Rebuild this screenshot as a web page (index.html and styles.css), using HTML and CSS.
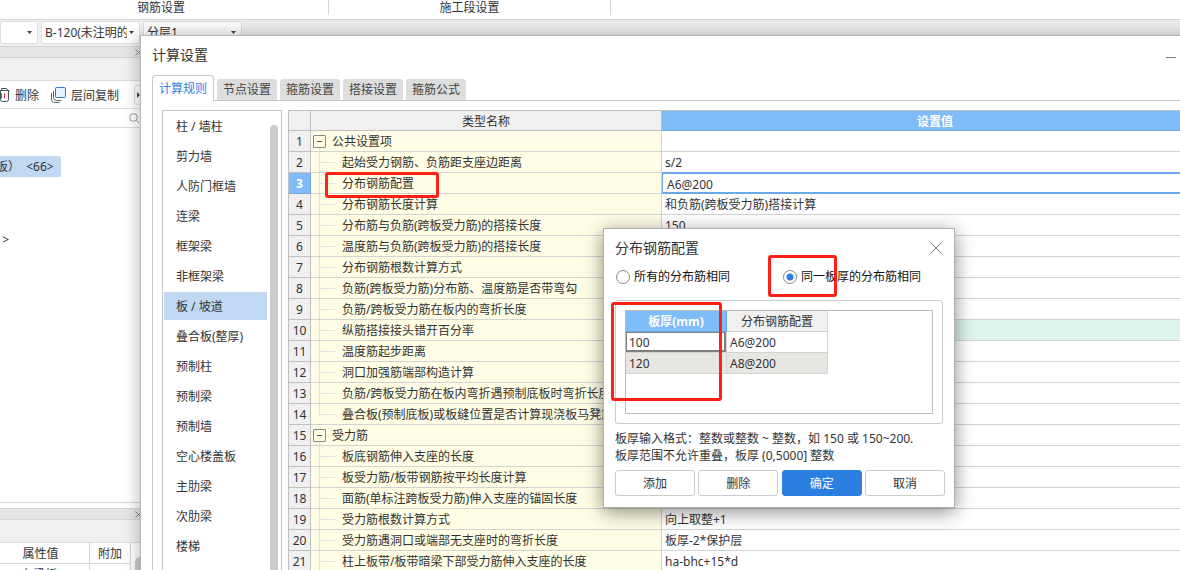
FILE: index.html
```
<!DOCTYPE html>
<html lang="zh-CN">
<head>
  <meta charset="UTF-8">
  <meta name="viewport" content="width=device-width, initial-scale=1.0">
  <title>计算设置</title>
  <link rel="stylesheet" href="styles.css">
</head>
<body>

  <!-- Main application window -->
  <div class="app">
    <div class="ribbon">
      <div class="ribbon-group first">钢筋设置</div>
      <div class="ribbon-group second">施工段设置</div>
    </div>

    <div class="selectors">
      <select class="combo short" aria-label="类别"><option></option></select>
      <select class="combo" aria-label="构件"><option>B-120(未注明的板)</option></select>
      <select class="combo" aria-label="分层"><option>分层1</option></select>
    </div>

    <div class="side">
      <div class="side-strip"><button class="strip-close" aria-label="关闭"><svg width="7" height="7" viewBox="0 0 7 7"><path d="M0.5 0.5l6 6M6.5 0.5l-6 6"/></svg></button></div>
      <div class="side-head"></div>
      <div class="side-tools">
        <button class="tool">
          <svg width="11" height="16" viewBox="0 0 11 16">
            <path d="M0 3.5h9.500M0.500 3.500v9q0 2 2 2h4q2 0 2-2v-9M1.500 3V1.500h5l1 1.500" stroke="#4a5056" fill="none"/>
            <path d="M1.500 6.500v5M4.500 6.500v5" stroke="#e0303a" fill="none"/>
          </svg>
          <span>删除</span>
        </button>
        <button class="tool">
          <svg width="16" height="16" viewBox="0 0 16 16">
            <path d="M0.500 6v6.500q0 3 3 3h5M2.500 4v6.500q0 3 3 3h5" stroke="#59636c" fill="none"/>
            <rect x="4.500" y="0.500" width="10" height="10" rx="1" fill="#e3f0ff" stroke="#2f78d8"/>
          </svg>
          <span>层间复制</span>
        </button>
        <button class="tool-more" aria-label="更多"><svg width="3" height="6" viewBox="0 0 3 6"><path d="M0 0l3 3l-3 3z"/></svg></button>
      </div>
      <div class="search">
        <input type="text" aria-label="搜索">
        <svg width="11" height="11" viewBox="0 0 11 11"><circle cx="4.500" cy="4.500" r="3.800"/><path d="M7.500 7.500L10 10"/></svg>
      </div>
      <div class="tree">
        <a class="tree-item selected" href="#">板）&nbsp; &lt;66&gt;</a>
        <a class="tree-item" href="#">&nbsp;&nbsp;&gt;</a>
      </div>
      <div class="side-strip lower"><button class="strip-close" aria-label="关闭"><svg width="7" height="7" viewBox="0 0 7 7"><path d="M0.5 0.5l6 6M6.5 0.5l-6 6"/></svg></button></div>
      <div class="side-head"></div>
      <div class="props-wrap">
        <table class="props">
          <tr><th>属性值</th><th class="extra">附加</th></tr>
          <tr><td>有梁板-1</td><td></td></tr>
        </table>
        <div class="props-scroll"></div>
      </div>
    </div>
  </div>

  <!-- Settings window -->
  <div class="window">
    <div class="window-title">
      <h1>计算设置</h1>
      <button class="minimize" aria-label="最小化"></button>
    </div>

    <div class="tabs">
      <button class="tab active">计算规则</button>
      <button class="tab">节点设置</button>
      <button class="tab">箍筋设置</button>
      <button class="tab">搭接设置</button>
      <button class="tab">箍筋公式</button>
    </div>

    <div class="panel">
      <div class="category">
        <nav class="category-list">
          <a href="#">柱 / 墙柱</a>
          <a href="#">剪力墙</a>
          <a href="#">人防门框墙</a>
          <a href="#">连梁</a>
          <a href="#">框架梁</a>
          <a href="#">非框架梁</a>
          <a href="#" class="current">板 / 坡道</a>
          <a href="#">叠合板(整厚)</a>
          <a href="#">预制柱</a>
          <a href="#">预制梁</a>
          <a href="#">预制墙</a>
          <a href="#">空心楼盖板</a>
          <a href="#">主肋梁</a>
          <a href="#">次肋梁</a>
          <a href="#">楼梯</a>
        </nav>
        <div class="category-scroll"></div>
      </div>

      <table class="rules">
        <colgroup><col class="col-no"><col class="col-name"><col></colgroup>
        <tr><th></th><th>类型名称</th><th class="picked">设置值</th></tr>
        <tr class="group"><td>1</td><td><button class="toggle" aria-label="折叠"></button>公共设置项</td><td></td></tr>
        <tr><td>2</td><td>起始受力钢筋、负筋距支座边距离</td><td>s/2</td></tr>
        <tr class="editing"><td>3</td><td>分布钢筋配置</td><td><input type="text" value="A6@200" aria-label="分布钢筋配置"></td></tr>
        <tr><td>4</td><td>分布钢筋长度计算</td><td>和负筋(跨板受力筋)搭接计算</td></tr>
        <tr><td>5</td><td>分布筋与负筋(跨板受力筋)的搭接长度</td><td>150</td></tr>
        <tr><td>6</td><td>温度筋与负筋(跨板受力筋)的搭接长度</td><td></td></tr>
        <tr><td>7</td><td>分布钢筋根数计算方式</td><td></td></tr>
        <tr><td>8</td><td>负筋(跨板受力筋)分布筋、温度筋是否带弯勾</td><td></td></tr>
        <tr><td>9</td><td>负筋/跨板受力筋在板内的弯折长度</td><td></td></tr>
        <tr class="changed"><td>10</td><td>纵筋搭接接头错开百分率</td><td></td></tr>
        <tr><td>11</td><td>温度筋起步距离</td><td></td></tr>
        <tr><td>12</td><td>洞口加强筋端部构造计算</td><td></td></tr>
        <tr><td>13</td><td>负筋/跨板受力筋在板内弯折遇预制底板时弯折长度</td><td></td></tr>
        <tr class="last"><td>14</td><td>叠合板(预制底板)或板缝位置是否计算现浇板马凳筋</td><td></td></tr>
        <tr class="group"><td>15</td><td><button class="toggle" aria-label="折叠"></button>受力筋</td><td></td></tr>
        <tr><td>16</td><td>板底钢筋伸入支座的长度</td><td></td></tr>
        <tr><td>17</td><td>板受力筋/板带钢筋按平均长度计算</td><td></td></tr>
        <tr><td>18</td><td>面筋(单标注跨板受力筋)伸入支座的锚固长度</td><td></td></tr>
        <tr><td>19</td><td>受力筋根数计算方式</td><td>向上取整+1</td></tr>
        <tr><td>20</td><td>受力筋遇洞口或端部无支座时的弯折长度</td><td>板厚-2*保护层</td></tr>
        <tr><td>21</td><td>柱上板带/板带暗梁下部受力筋伸入支座的长度</td><td>ha-bhc+15*d</td></tr>
      </table>
    </div>
  </div>

  <!-- Distribution rebar dialog -->
  <div class="dialog">
    <div class="dialog-title">
      <h2>分布钢筋配置</h2>
      <button class="dialog-close" aria-label="关闭"><svg width="12" height="12" viewBox="0 0 12 12"><path d="M0.5 0.5l11 11M11.5 0.5l-11 11"/></svg></button>
    </div>
    <div class="options">
      <label><input type="radio" name="mode">所有的分布筋相同</label>
      <label><input type="radio" name="mode" checked>同一板厚的分布筋相同</label>
    </div>
    <div class="box">
      <div class="box-inner">
        <table class="sizes">
          <tr><th class="picked">板厚(mm)</th><th>分布钢筋配置</th></tr>
          <tr><td class="focus"><input type="text" value="100" aria-label="板厚"></td><td>A6@200</td></tr>
          <tr class="alt"><td>120</td><td>A8@200</td></tr>
        </table>
      </div>
    </div>
    <p class="hint">板厚输入格式：整数或整数 ~ 整数，如 150 或 150~200.<br>板厚范围不允许重叠，板厚 (0,5000] 整数</p>
    <div class="actions">
      <button>添加</button>
      <button>删除</button>
      <button class="primary">确定</button>
      <button>取消</button>
    </div>
  </div>

  <!-- Red highlight frames -->
  <div class="mark mark-row"></div>
  <div class="mark mark-radio"></div>
  <div class="mark mark-size"></div>

</body>
</html>
```

FILE: styles.css
```
/* Global Styles */
* {
  box-sizing: border-box;
}

body {
  margin: 0;
  height: 100vh;
  overflow: hidden;
  position: relative;
  font-family: "Noto Sans", "Noto Sans CJK SC", sans-serif;
  font-size: 12px;
  line-height: 16px;
  color: #333;
  background: #fff;
}

button,
input,
select {
  font: inherit;
  color: inherit;
  margin: 0;
}

button {
  padding: 0;
  border: none;
  background: none;
}

a {
  color: inherit;
  text-decoration: none;
}

table {
  border-collapse: separate;
  border-spacing: 0;
  table-layout: fixed;
}

th {
  font-weight: normal;
}

/* Main application */
.app {
  height: 100%;
  display: flex;
  flex-direction: column;
}

.ribbon {
  display: flex;
  height: 20px;
  padding-bottom: 4px;
  border-bottom: 1px solid #d5d5d5;
}

.ribbon-group {
  border-right: 1px solid #d5d5d5;
  text-align: center;
}

.ribbon-group.first {
  width: 329px;
  padding-right: 6px;
}

.ribbon-group.second {
  width: 282px;
}

.selectors {
  display: flex;
  gap: 3px;
  height: 26px;
  padding-top: 1px;
  background: #f0f0f0;
}

.combo {
  appearance: none;
  width: 99px;
  height: 23px;
  padding: 0 12px 0 3px;
  border: 1px solid #ddd;
  border-radius: 3px;
  background: #fff url("data:image/svg+xml,%3Csvg xmlns='http://www.w3.org/2000/svg' width='5' height='3'%3E%3Cpath d='M0 0h5L2.5 3z' fill='%23444'/%3E%3C/svg%3E") no-repeat right 5px center;
}

.combo.short {
  width: 38px;
}

.side {
  flex: 1;
  width: 145px;
  display: flex;
  flex-direction: column;
}

.side-strip {
  display: flex;
  justify-content: flex-end;
  align-items: center;
  height: 12px;
  padding-right: 3px;
  border: solid #d5d5d5;
  border-width: 1px 0;
  background: #e5e5e5;
}

.strip-close {
  display: flex;
}

.strip-close svg {
  fill: none;
  stroke: #888;
}

.side-head {
  height: 23px;
  background: #f0f0f0;
  border-bottom: 1px solid #ddd;
}

.side-tools {
  display: flex;
  align-items: center;
  gap: 12px;
  height: 28px;
  border-bottom: 1px solid #e0e0e0;
}

.tool {
  display: flex;
  align-items: center;
  gap: 4px;
  white-space: nowrap;
}

.tool span {
  padding-top: 2px;
}

.tool-more {
  display: flex;
  align-items: center;
  width: 11px;
  height: 20px;
  margin-left: auto;
  padding-left: 2px;
  border: 1px solid #ddd;
  border-radius: 3px;
}

.tool-more svg {
  fill: #444;
}

.search {
  display: flex;
  align-items: center;
  height: 19px;
  padding-right: 5px;
  border-bottom: 1px solid #ddd;
}

.search input {
  flex: 1;
  min-width: 0;
  border: none;
  outline: none;
}

.search svg {
  fill: none;
  stroke: #999;
}

.tree {
  flex: 1;
  padding-top: 28px;
  display: flex;
  flex-direction: column;
  align-items: flex-start;
  gap: 52px;
}

.tree-item {
  line-height: 21px;
  padding-right: 4px;
  text-indent: -4px;
}

.tree-item.selected {
  width: 61px;
  white-space: nowrap;
  background: #c0d8f2;
  border-radius: 0 3px 3px 0;
}

.side-strip.lower {
  box-shadow: 0 -5px #fff, 0 -6px #d5d5d5;
}

.props-wrap {
  display: flex;
  justify-content: space-between;
  height: 27px;
  overflow: hidden;
}

.props {
  width: 131px;
}

.props th,
.props td {
  height: 21px;
  padding: 2px 0 0;
  border-right: 1px solid #d5d5d5;
  border-bottom: 1px solid #d5d5d5;
  text-align: center;
}

.props th:first-child {
  padding-right: 8px;
}

.props .extra {
  width: 41px;
}

.props-scroll {
  width: 10px;
  margin-top: 14px;
  border-radius: 5px 5px 0 0;
  background: #ccc;
}

/* Settings window */
.window {
  position: absolute;
  top: 35px;
  left: 140px;
  right: -50px;
  bottom: -20px;
  display: flex;
  flex-direction: column;
  padding: 0 10px 0 11px;
  background: #fff;
  border: 1px solid #b8b8b8;
  box-shadow: 0 0 16px rgba(0, 0, 0, 0.3);
  overflow: hidden;
}

.window-title {
  display: flex;
  justify-content: space-between;
  align-items: center;
  height: 39px;
}

.window-title h1,
.dialog-title h2 {
  margin: 0;
  font-size: 14px;
  font-weight: normal;
}

.window-title h1 {
  padding-bottom: 2px;
}

.minimize {
  width: 10px;
  height: 1px;
  margin-right: 43px;
  margin-top: 3px;
  background: #777;
}

.tabs {
  display: flex;
  align-items: flex-end;
  gap: 3px;
  height: 26px;
  border-bottom: 1px solid #c5c8cc;
}

.tab {
  width: 60px;
  height: 21px;
  border-radius: 3px 3px 0 0;
  background: #ddd;
  color: #444;
}

.tab.active {
  width: 62px;
  height: 26px;
  margin-bottom: -1px;
  border: 1px solid #c5c8cc;
  border-bottom: none;
  border-radius: 4px 4px 0 0;
  background: #fff;
  color: #2b7fe0;
}

.panel {
  flex: 1;
  display: flex;
  gap: 6px;
  padding: 9px 9px 0;
  border: solid #c5c8cc;
  border-width: 0 1px;
}

.category {
  display: flex;
  justify-content: space-between;
  width: 120px;
  padding: 1px 3px 0 1px;
  border: 1px solid #c5c5c5;
}

.category-list {
  width: 103px;
  display: flex;
  flex-direction: column;
  gap: 2px;
}

.category-list a {
  padding: 2px 0 0 12px;
  line-height: 26px;
}

.category-list .current {
  background: #c0d8f2;
}

.category-scroll {
  width: 8px;
  margin-top: 13px;
  border-radius: 4px 4px 0 0;
  background: #ccc;
}

/* Rules table */
.rules {
  flex: 1;
  align-self: flex-start;
  border-top: 1px solid #c0c0c0;
  border-left: 1px solid #c0c0c0;
}

.col-no {
  width: 22px;
}

.col-name {
  width: 351px;
}

.rules th,
.rules td {
  height: 21px;
  padding: 2px 0 0;
  line-height: 18px;
  white-space: nowrap;
  overflow: hidden;
  border-right: 1px solid #d3d3d3;
  border-bottom: 1px solid #d3d3d3;
}

.rules th {
  height: 20px;
  line-height: 17px;
  background: #f0f0f0;
  border-color: #c0c0c0;
}

.rules th.picked,
.sizes th.picked {
  background: #80bbfa;
  border-color: #6ba8e5;
  color: #fff;
  font-weight: bold;
}

.rules td:nth-child(1) {
  background: #f0f0f0;
  border-color: #c0c0c0;
  text-align: center;
}

.rules td:nth-child(2) {
  padding-left: 31px;
  background: linear-gradient(#e2e2e2, #e2e2e2) no-repeat 8px 0 / 1px 21px, linear-gradient(#e2e2e2, #e2e2e2) no-repeat 9px 10px / 15px 1px, #fffde5;
}

.rules .last td:nth-child(2) {
  background-size: 1px 11px, 15px 1px, auto;
}

.rules .group td:nth-child(2) {
  padding-left: 2px;
  background: linear-gradient(#e2e2e2, #e2e2e2) no-repeat 8px 16px / 1px 5px, #fffde5;
}

.rules td:nth-child(3) {
  padding-left: 3px;
}

.rules .editing td:nth-child(1) {
  background: #80bbfa;
  border-color: #6ba8e5;
  color: #fff;
  font-weight: bold;
}

.rules .editing td:nth-child(3) {
  padding: 0;
  border-color: #6ba8e5;
}

.rules tr:has(+ .editing) td:nth-child(3) {
  border-bottom-color: #6ba8e5;
}

.rules .editing input {
  display: block;
  width: 100%;
  height: 20px;
  padding: 2px 4px 0;
  border: 1px solid #6ba8e5;
  outline: none;
}

.rules .changed td:nth-child(3) {
  background: #dcf4ea;
}

.toggle {
  width: 13px;
  height: 13px;
  margin-right: 6px;
  vertical-align: -1px;
  border: 1px solid #888;
  border-radius: 1px;
  background: linear-gradient(#555, #555) no-repeat center / 5px 1px;
}

/* Dialog */
.dialog {
  position: absolute;
  top: 228px;
  left: 603px;
  width: 352px;
  padding: 9px 9px 11px 11px;
  background: #fff;
  border: 1px solid #b0b0b0;
  box-shadow: 0 4px 18px rgba(0, 0, 0, 0.45);
}

.dialog-title {
  display: flex;
  justify-content: space-between;
  align-items: center;
  height: 20px;
  padding-right: 3px;
}

.dialog-close {
  display: flex;
}

.dialog-close svg {
  fill: none;
  stroke: #777;
}

.options {
  display: flex;
  gap: 53px;
  height: 18px;
  margin-top: 10px;
  padding-left: 1px;
  line-height: 18px;
  color: #111;
}

.options label {
  display: flex;
  align-items: center;
  gap: 4px;
}

.options input {
  appearance: none;
  width: 14px;
  height: 14px;
  border: 1px solid #888;
  border-radius: 50%;
  background: #fff;
}

.options input:checked {
  background: radial-gradient(circle, #2b7fe0 3px, #fff 4px);
}

.box {
  width: 328px;
  height: 124px;
  margin-top: 14px;
  padding: 9px;
  border: 1px solid #ccc;
  border-radius: 3px;
}

.box-inner {
  height: 104px;
  border: 1px solid #bbb;
}

.sizes {
  width: 202px;
}

.sizes th,
.sizes td {
  height: 21px;
  padding: 2px 3px 0;
  line-height: 18px;
  border-right: 1px solid #d3d3d3;
  border-bottom: 1px solid #d3d3d3;
}

.sizes th {
  background: #f0f0f0;
}

.sizes .focus {
  padding: 0;
}

.sizes .focus input {
  display: block;
  width: 100%;
  height: 20px;
  padding: 2px 2px 0;
  border: 1px solid #808080;
  border-right-width: 2px;
  border-bottom-width: 2px;
  outline: none;
}

.sizes .alt {
  background: #e8e6e3;
}

.hint {
  margin: 6px 0 6px;
  line-height: 17px;
}

.actions {
  display: flex;
  justify-content: space-between;
}

.actions button {
  width: 80px;
  height: 26px;
  padding-top: 2px;
  border: 1px solid #ccc;
  border-radius: 3px;
  background: #fff;
}

.actions .primary {
  border-color: #2b7fe0;
  background: #2b7fe0;
  color: #fff;
}

/* Highlight frames */
.mark {
  position: absolute;
  border: 3px solid #ff2015;
  border-radius: 3px;
  pointer-events: none;
}

.mark-row {
  top: 172px;
  left: 325px;
  width: 114px;
  height: 26px;
}

.mark-radio {
  top: 255px;
  left: 768px;
  width: 69px;
  height: 42px;
}

.mark-size {
  top: 302px;
  left: 611px;
  width: 111px;
  height: 99px;
}
```
